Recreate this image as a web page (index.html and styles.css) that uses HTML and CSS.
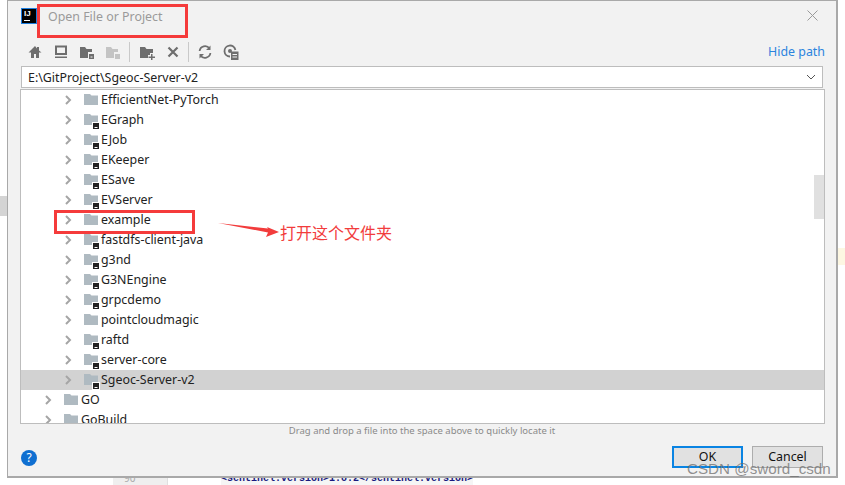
FILE: index.html
```html
<!DOCTYPE html>
<html lang="zh">
<head>
<meta charset="utf-8">
<title>Open File or Project</title>
<link rel="stylesheet" href="styles.css">
</head>
<body>
<div class="page">
  <div class="backdrop-patch"></div>
  <div class="backdrop-note"></div>
  <main class="dialog">
    <header class="titlebar">
      <div class="logo"><span class="logo-text">IJ</span><span class="logo-bar"></span></div>
      <div class="title">Open File or Project</div>
      <svg class="close" width="11" height="11" viewBox="0 0 11 11"><path d="M.5.5l10 10M10.5.5l-10 10" stroke="#9a9a9a" fill="none"/></svg>
    </header>
    <div class="toolbar">
      <svg class="tool" width="16" height="16" viewBox="0 0 16 16"><path d="M8 2 1.5 8.5H4V14h3v-4h2v4h3V8.500h2.500L12 6.400V3h-2v1.400z" fill="#6e6e6e"/></svg>
      <svg class="tool" width="16" height="16" viewBox="0 0 16 16"><path d="M3 2.500h10V10H3z" fill="none" stroke="#6e6e6e" stroke-width="2"/><path d="M2 12.500h12V14H2z" fill="#6e6e6e"/></svg>
      <svg class="tool" width="16" height="16" viewBox="0 0 16 16"><path d="M1 3h5l1.500 2H13v3H9v6H1z" fill="#6e6e6e"/><path d="M10 10h5v5h-5z" fill="#6e6e6e"/><path d="M11.500 12.500h2v1h-2z" fill="#f2f2f2"/></svg>
      <svg class="tool" width="16" height="16" viewBox="0 0 16 16"><path d="M1 3h5l1.500 2H13v3H9v6H1z" fill="#c4c4c4"/><path d="M10 10h5v5h-5z" fill="#c4c4c4"/></svg>
      <span class="sep"></span>
      <svg class="tool" width="16" height="16" viewBox="0 0 16 16"><path d="M1 3h5l1.500 2H14v4h-3v2H9v3H1z" fill="#6e6e6e"/><path d="M12 10v2.500h-2.500V14H12v2h1.500v-2H16v-1.500h-2.500V10z" fill="#6e6e6e"/></svg>
      <svg class="tool" width="16" height="16" viewBox="0 0 16 16"><path d="M3.500 3.500l9 9M12.500 3.500l-9 9" stroke="#6e6e6e" stroke-width="2.200" fill="none"/></svg>
      <span class="sep sep-b"></span>
      <svg class="tool" width="16" height="16" viewBox="0 0 16 16"><path d="M2.600 7A5.500 5.500 0 0 1 12.500 4.500M13.400 9A5.500 5.500 0 0 1 3.500 11.500" stroke="#6e6e6e" stroke-width="1.800" fill="none"/><path d="M13.500 1.500V6H9zM2.500 14.500V10H7z" fill="#6e6e6e"/></svg>
      <svg class="tool" width="16" height="16" viewBox="0 0 16 16"><path d="M7 12.500A5.500 5.500 0 1 1 12.400 6" stroke="#6e6e6e" stroke-width="1.800" fill="none"/><circle cx="7" cy="7" r="2" fill="#6e6e6e"/><path d="M8 7.500h7.500V16H8z" fill="#6e6e6e"/><path d="M9.500 10h4.500v1H9.500zM9.500 12.500h4.500v1H9.500z" fill="#f2f2f2"/></svg>
      <a class="hide-path">Hide path</a>
    </div>
    <div class="path-field">
      <span class="path-text">E:\GitProject\Sgeoc-Server-v2</span>
      <svg width="10" height="6" viewBox="0 0 10 6"><path d="M1 1l4 4 4-4" stroke="#555" fill="none"/></svg>
    </div>
    <div class="tree-wrap">
      <svg width="0" height="0" class="defs"><defs>
        <symbol id="chev" viewBox="0 0 7 10"><path d="M1 1l4 4-4 4" stroke="#a5a5a5" stroke-width="2" fill="none"/></symbol>
        <symbol id="folder" viewBox="0 0 14 11"><path d="M0 0h6l1.500 1.500H14V11H0z" fill="#afbac1"/></symbol>
        <symbol id="folder-mod" viewBox="0 0 16 16"><path d="M0 0h6l1.500 1.500H14V11H0z" fill="#afbac1"/><path d="M8 8h8v8H8z" fill="#fff"/><path d="M9 9h6v6H9z" fill="#222"/><path d="M10.500 13h3v1h-3z" fill="#fff"/></symbol>
      </defs></svg>
      <ul class="tree">
        <li class="row l2"><svg class="chev"><use href="#chev"/></svg><svg class="folder"><use href="#folder"/></svg><span class="name">EfficientNet-PyTorch</span></li>
        <li class="row l2"><svg class="chev"><use href="#chev"/></svg><svg class="folder mod"><use href="#folder-mod"/></svg><span class="name">EGraph</span></li>
        <li class="row l2"><svg class="chev"><use href="#chev"/></svg><svg class="folder mod"><use href="#folder-mod"/></svg><span class="name">EJob</span></li>
        <li class="row l2"><svg class="chev"><use href="#chev"/></svg><svg class="folder mod"><use href="#folder-mod"/></svg><span class="name">EKeeper</span></li>
        <li class="row l2"><svg class="chev"><use href="#chev"/></svg><svg class="folder mod"><use href="#folder-mod"/></svg><span class="name">ESave</span></li>
        <li class="row l2"><svg class="chev"><use href="#chev"/></svg><svg class="folder mod"><use href="#folder-mod"/></svg><span class="name">EVServer</span></li>
        <li class="row l2"><svg class="chev"><use href="#chev"/></svg><svg class="folder"><use href="#folder"/></svg><span class="name">example</span></li>
        <li class="row l2"><svg class="chev"><use href="#chev"/></svg><svg class="folder mod"><use href="#folder-mod"/></svg><span class="name">fastdfs-client-java</span></li>
        <li class="row l2"><svg class="chev"><use href="#chev"/></svg><svg class="folder mod"><use href="#folder-mod"/></svg><span class="name">g3nd</span></li>
        <li class="row l2"><svg class="chev"><use href="#chev"/></svg><svg class="folder mod"><use href="#folder-mod"/></svg><span class="name">G3NEngine</span></li>
        <li class="row l2"><svg class="chev"><use href="#chev"/></svg><svg class="folder mod"><use href="#folder-mod"/></svg><span class="name">grpcdemo</span></li>
        <li class="row l2"><svg class="chev"><use href="#chev"/></svg><svg class="folder"><use href="#folder"/></svg><span class="name">pointcloudmagic</span></li>
        <li class="row l2"><svg class="chev"><use href="#chev"/></svg><svg class="folder mod"><use href="#folder-mod"/></svg><span class="name">raftd</span></li>
        <li class="row l2"><svg class="chev"><use href="#chev"/></svg><svg class="folder mod"><use href="#folder-mod"/></svg><span class="name">server-core</span></li>
        <li class="row l2 selected"><svg class="chev"><use href="#chev"/></svg><svg class="folder mod"><use href="#folder-mod"/></svg><span class="name">Sgeoc-Server-v2</span></li>
        <li class="row l1"><svg class="chev"><use href="#chev"/></svg><svg class="folder"><use href="#folder"/></svg><span class="name">GO</span></li>
        <li class="row l1"><svg class="chev"><use href="#chev"/></svg><svg class="folder"><use href="#folder"/></svg><span class="name">GoBuild</span></li>
      </ul>
      <div class="scroll-thumb"></div>
    </div>
    <p class="hint">Drag and drop a file into the space above to quickly locate it</p>
    <footer class="footer">
      <span class="help">?</span>
      <button class="btn primary">OK</button>
      <button class="btn">Cancel</button>
    </footer>
  </main>
  <div class="editor-strip">
    <span class="gutter">90</span>
    <code class="code">&lt;sentinel.version&gt;1.8.2&lt;/sentinel.version&gt;</code>
  </div>

  <div class="mark mark-title"></div>
  <div class="mark mark-example"></div>
  <svg class="arrow" width="62" height="18" viewBox="0 0 62 18"><path d="M0 1 50 6.500 49 5 61 10 48 15 50 10.500z" fill="#f23c3c"/></svg>
  <div class="note">打开这个文件夹</div>
  <div class="watermark">CSDN @sword_csdn</div>
</div>
</body>
</html>
```
FILE: styles.css
```css
* { box-sizing: border-box; }
html, body { margin: 0; padding: 0; }
body { background: #fff; font-family: "Noto Sans", "Noto Sans CJK SC", sans-serif; font-size: 12.4px; color: #222; }
.page { position: relative; width: 845px; height: 485px; overflow: hidden; }
.backdrop-patch { position: absolute; left: 0; top: 196px; width: 7px; height: 20px; background: #d4d4d4; }
.backdrop-note { position: absolute; left: 838px; top: 248px; width: 7px; height: 17px; background: #fdf7e2; }
.dialog { position: relative; z-index: 1; width: 831px; height: 478px; margin-left: 7px; background: #f2f2f2; border: 1px solid #a9a9a9; border-width: 1px 2px 2px 1px; display: flex; flex-direction: column; }
.titlebar { height: 38px; display: flex; align-items: flex-start; padding: 7px 18px 0 13px; }
.logo { width: 16px; height: 16px; background: #000; border: 1px solid #1e7fe0; position: relative; flex: none; color: #fff; }
.logo-text { position: absolute; left: 2px; top: 0; font: bold 8px/9px "Liberation Sans", sans-serif; }
.logo-bar { position: absolute; left: 2px; bottom: 2px; width: 6px; height: 1px; background: #fff; }
.title { margin-left: 11px; color: #9a9a9a; font-size: 12.4px; line-height: 17px; flex: 1; }
.close { margin-top: 2px; }
.toolbar { height: 27px; display: flex; align-items: center; padding: 0 11px 2px 19px; }
.tool { flex: none; width: 16px; height: 16px; margin-right: 10px; }
.sep { width: 1px; height: 20px; background: #c9c9c9; margin: 0 9px 0 -2px; flex: none; }
.sep-b { margin: 0 8px 0 -3px; }
.hide-path { margin-left: auto; color: #2b84de; font-size: 12.4px; }
.path-field { margin: 0 13px; height: 22px; background: #fff; border: 1px solid #bdbdbd; display: flex; align-items: center; justify-content: space-between; padding: 0 6px; color: #222; }
.tree-wrap { margin: 1px 11px 0 12px; height: 335px; background: #fff; border: 1px solid #bdbdbd; position: relative; overflow: hidden; flex: none; }
.defs { position: absolute; }
.tree { list-style: none; margin: 0; padding: 0; }
.row { height: 20px; display: flex; align-items: center; white-space: nowrap; }
.row.l2 { padding-left: 44px; }
.row.l1 { padding-left: 24px; }
.row.selected { background: #d2d2d2; }
.chev { width: 7px; height: 10px; flex: none; margin-top: -1px; }
.folder { width: 14px; height: 11px; margin: -1px 3px 0 12px; flex: none; }
.folder.mod { width: 16px; height: 16px; margin: 4px 1px 0 12px; }
.name { line-height: 20px; padding-bottom: 1px; }
.scroll-thumb { position: absolute; right: 0; top: 85px; width: 10px; height: 44px; background: #e0e0e0; }
.hint { margin: 0; text-align: center; font-size: 9.5px; line-height: 13px; color: #8a8a8a; }
.footer { flex: 1; display: flex; align-items: flex-start; padding: 9px 13px 0; gap: 9px; }
.help { width: 16px; height: 16px; margin: 4px auto 0 0; border-radius: 50%; background: #0f6fd1; color: #fff; font-size: 12px; line-height: 16px; text-align: center; }
.btn { width: 71px; height: 22px; background: #e1e1e1; border: 1px solid #adadad; font: 12.4px/18px "Noto Sans", sans-serif; color: #111; padding: 0; }
.btn.primary { border: 2px solid #0a84e3; }
.editor-strip { height: 7px; display: flex; font-size: 10px; }
.gutter { margin-left: 113px; width: 55px; height: 7px; background: #efefef; color: #aaa; padding-left: 11px; line-height: 1px; border-right: 1px solid #e0e0e0; }
.code { margin: -4px 0 0 53px; font: bold 10px/10px "Liberation Mono", monospace; color: #1a1a80; background: #f5f5f5; height: 11px; }
.mark { position: absolute; z-index: 2; border: 3px solid #f53b3b; }
.mark-title { left: 37px; top: 4px; width: 151px; height: 34px; }
.mark-example { left: 54px; top: 210px; width: 141px; height: 24px; }
.arrow { position: absolute; z-index: 2; left: 218px; top: 222px; }
.note { position: absolute; z-index: 2; left: 280px; top: 222px; color: #f23c3c; font: 16px/20px "Noto Sans CJK SC", sans-serif; }
.watermark { position: absolute; z-index: 2; left: 687px; top: 460px; font: 15.2px/18px "Liberation Sans", sans-serif; color: rgba(110,110,110,.75); white-space: nowrap; }
```
